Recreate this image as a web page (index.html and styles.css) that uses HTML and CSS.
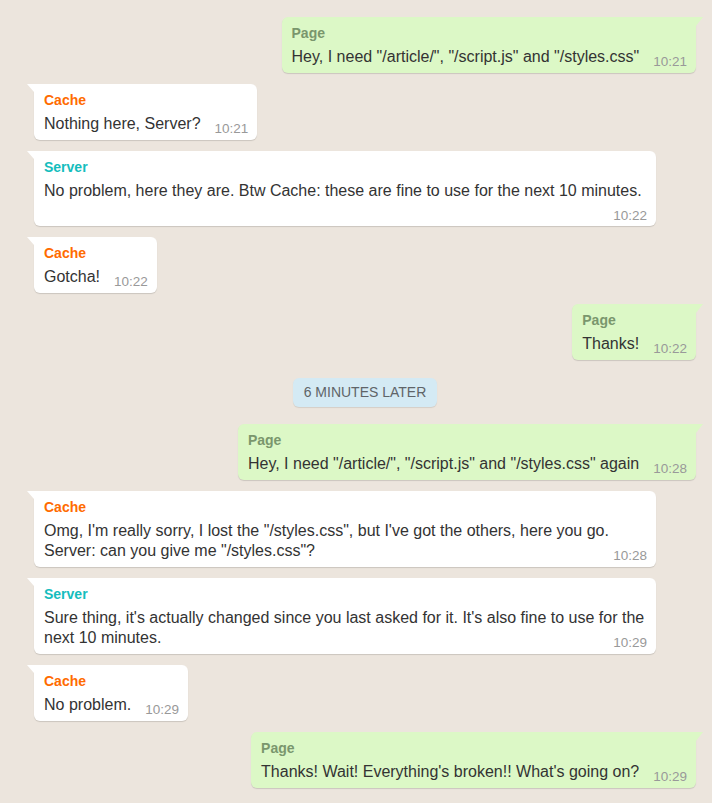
FILE: index.html
```html
<!DOCTYPE html>
<html>
<head>
<meta charset="utf-8">
<link rel="stylesheet" href="styles.css">
</head>
<body>
<div class="chat">
  <div class="msg out"><div class="name page">Page</div><div class="text">Hey, I need "/article/", "/script.js" and "/styles.css"<span class="time">10:21</span></div></div>
  <div class="msg in"><div class="name cache">Cache</div><div class="text">Nothing here, Server?<span class="time">10:21</span></div></div>
  <div class="msg in"><div class="name server">Server</div><div class="text">No problem, here they are. Btw Cache: these are fine to use for the next 10 minutes.<span class="time">10:22</span></div></div>
  <div class="msg in"><div class="name cache">Cache</div><div class="text">Gotcha!<span class="time">10:22</span></div></div>
  <div class="msg out"><div class="name page">Page</div><div class="text">Thanks!<span class="time">10:22</span></div></div>
  <div class="badge">6 minutes later</div>
  <div class="msg out"><div class="name page">Page</div><div class="text">Hey, I need "/article/", "/script.js" and "/styles.css" again<span class="time">10:28</span></div></div>
  <div class="msg in"><div class="name cache">Cache</div><div class="text">Omg, I'm really sorry, I lost the "/styles.css", but I've got the others, here you go. Server: can you give me "/styles.css"?<span class="time">10:28</span></div></div>
  <div class="msg in"><div class="name server">Server</div><div class="text">Sure thing, it's actually changed since you last asked for it. It's also fine to use for the next 10 minutes.<span class="time">10:29</span></div></div>
  <div class="msg in"><div class="name cache">Cache</div><div class="text">No problem.<span class="time">10:29</span></div></div>
  <div class="msg out"><div class="name page">Page</div><div class="text">Thanks! Wait! Everything's broken!! What's going on?<span class="time">10:29</span></div></div>
</div>
</body>
</html>
```

FILE: styles.css
```css
html, body {
  margin: 0;
  padding: 0;
  background: #ece5dd;
}
body {
  font-family: "Liberation Sans", Arial, sans-serif;
  color: #333;
}
.chat {
  display: flex;
  flex-direction: column;
  align-items: flex-start;
  gap: 11px;
  padding: 17px 16px 20px 34px;
}
.msg {
  position: relative;
  max-width: 622px;
  box-sizing: border-box;
  padding: 6px 9px 6px 10px;
  border-radius: 6px;
  box-shadow: 0 1px 1px rgba(0, 0, 0, 0.14);
  display: flow-root;
}
.msg.in {
  background: #fff;
  border-top-left-radius: 0;
}
.msg.out {
  background: #dcf8c6;
  border-top-right-radius: 0;
  align-self: flex-end;
}
.msg.in::before {
  content: "";
  position: absolute;
  top: 0;
  left: -7px;
  width: 0;
  height: 0;
  border-top: 8px solid #fff;
  border-left: 7px solid transparent;
}
.msg.out::before {
  content: "";
  position: absolute;
  top: 0;
  right: -7px;
  width: 0;
  height: 0;
  border-top: 9px solid #dcf8c6;
  border-right: 7px solid transparent;
}
.name {
  font-size: 14px;
  font-weight: bold;
  line-height: 20px;
  margin-bottom: 4px;
}
.name.page { color: #7a966d; }
.name.cache { color: #ff6b00; }
.name.server { color: #14bdbd; }
.text {
  font-size: 16px;
  line-height: 20px;
}
.time {
  float: right;
  font-size: 13.5px;
  line-height: 20px;
  color: #999;
  margin: 5px 0 -6px 14px;
}
.badge {
  align-self: center;
  margin: 7px 0 6px;
  background: #d4eaf4;
  color: #5f6468;
  font-size: 14px;
  line-height: 17px;
  text-transform: uppercase;
  padding: 6px 11px;
  border-radius: 6px;
  box-shadow: 0 1px 1px rgba(0, 0, 0, 0.1);
}
```
